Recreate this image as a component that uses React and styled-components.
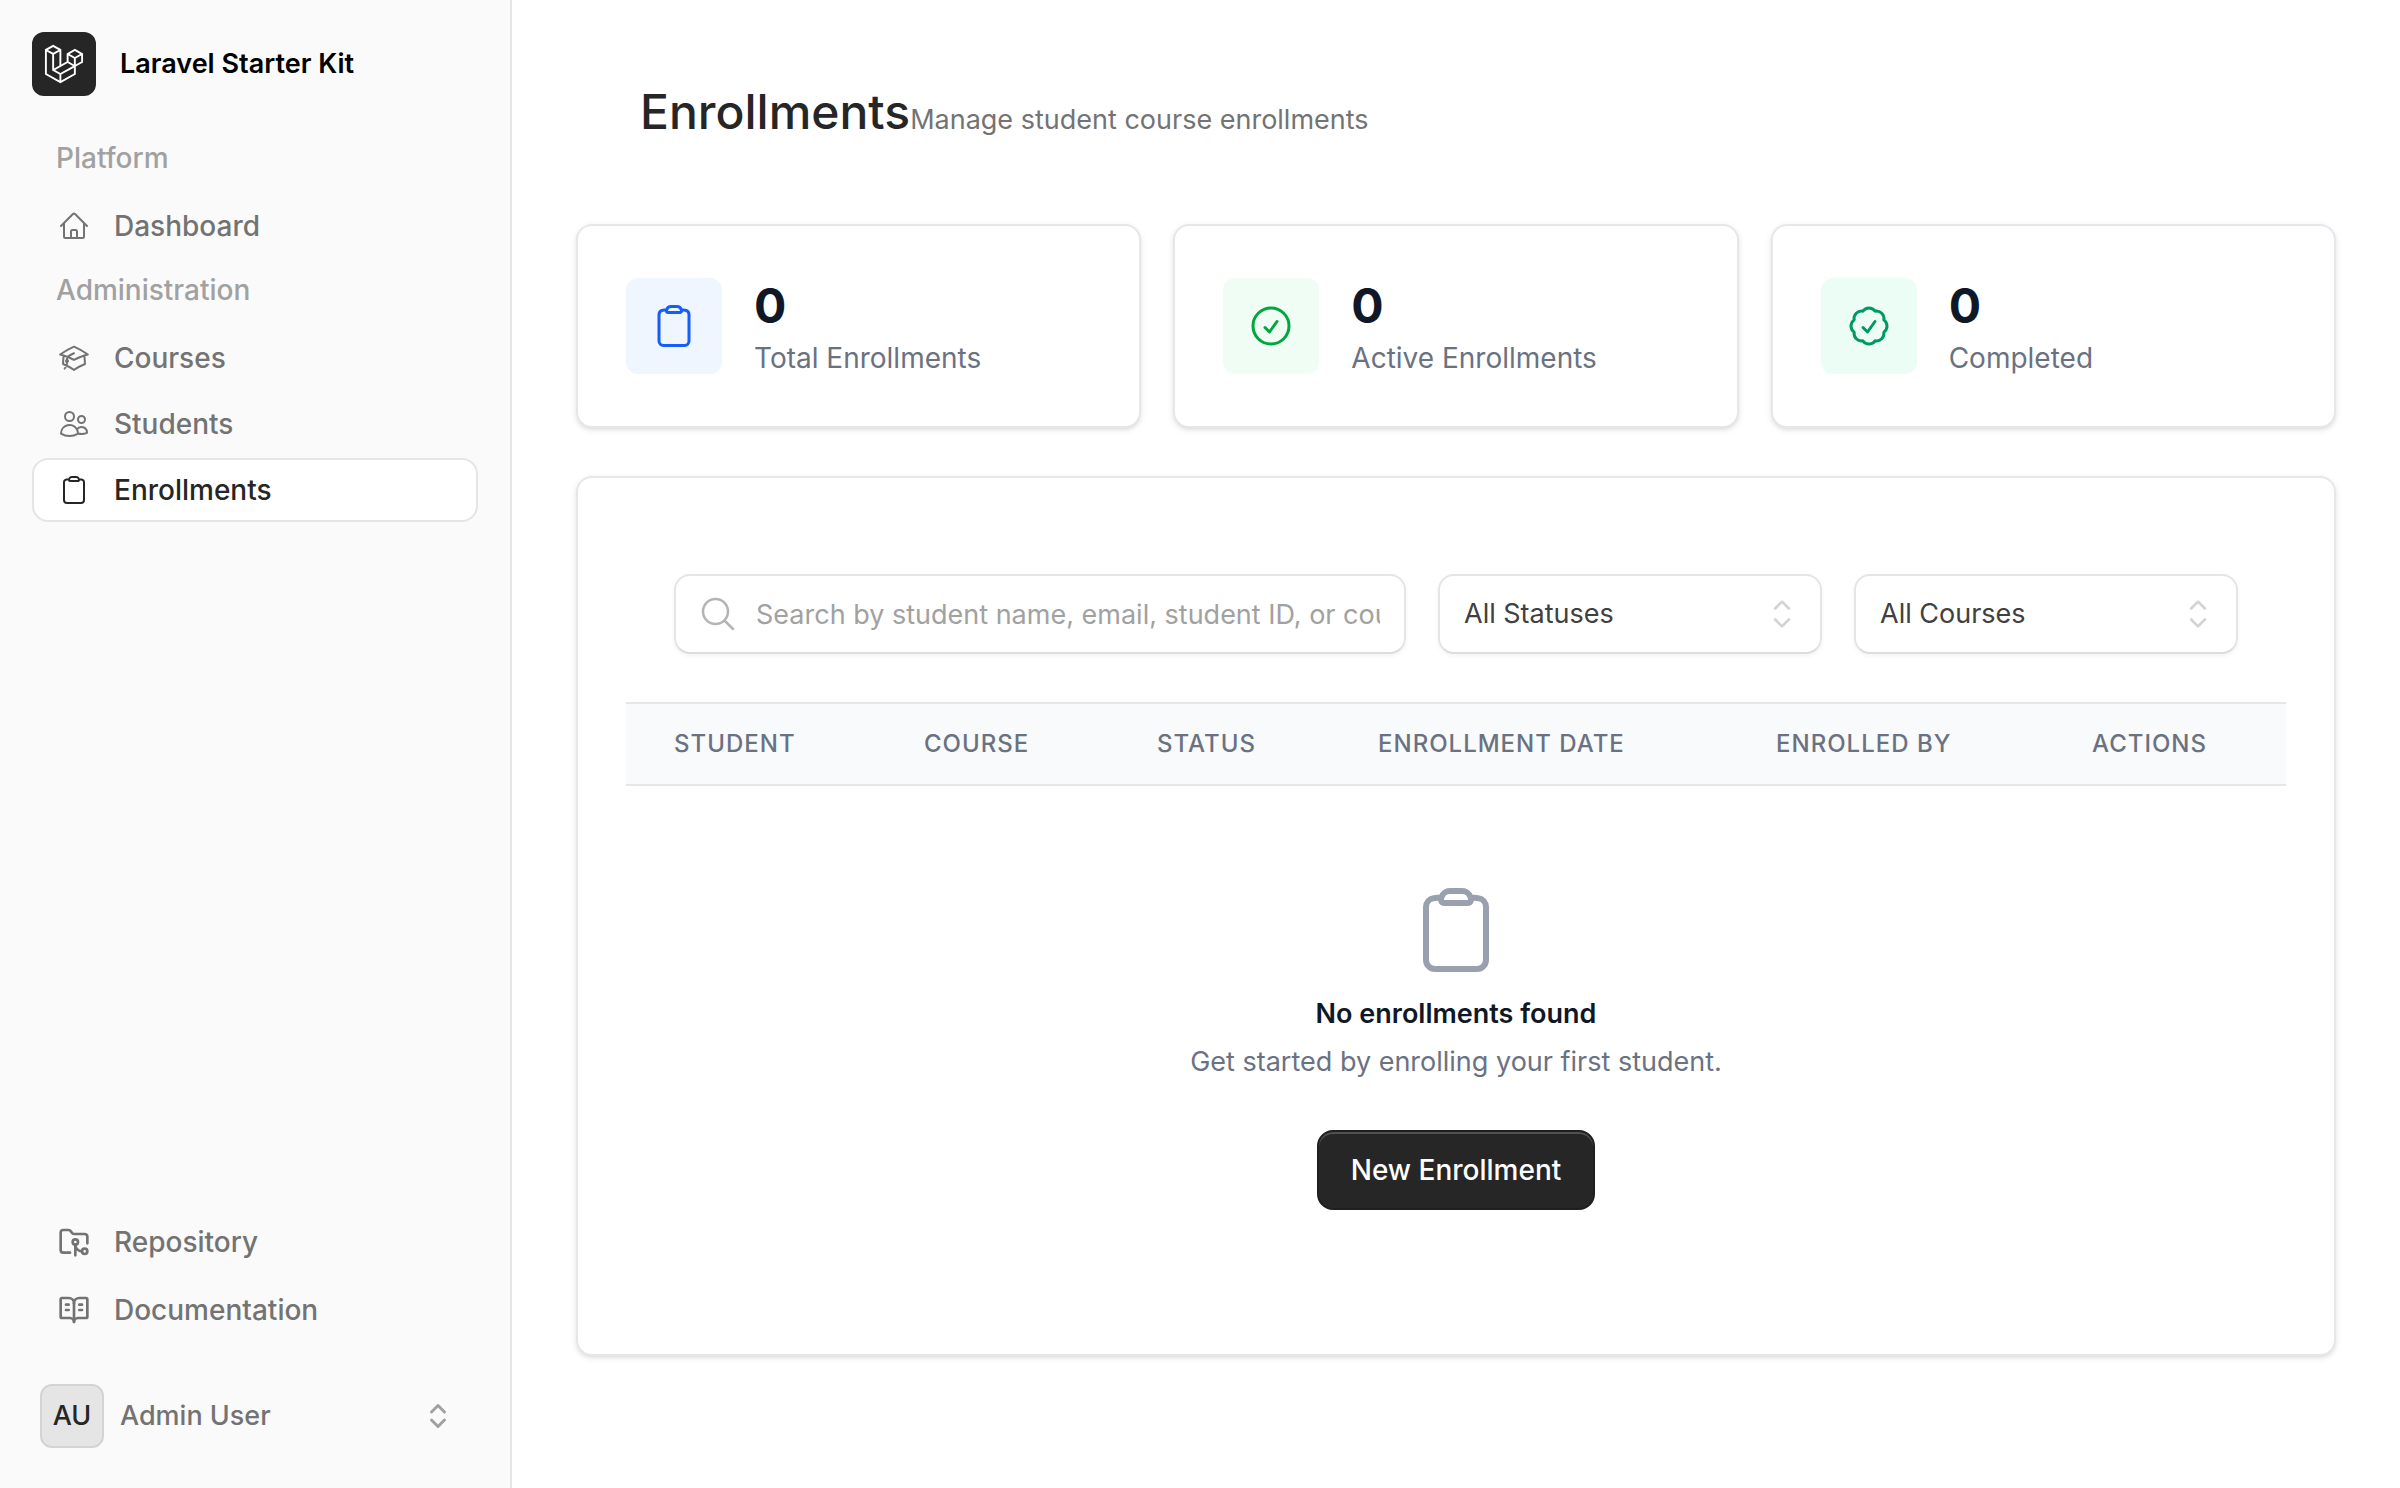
import React from "react";
import styled, { createGlobalStyle, css } from "styled-components";
import {
  HiOutlineAcademicCap,
  HiOutlineCheckBadge,
  HiOutlineCheckCircle,
  HiOutlineChevronUpDown,
  HiOutlineClipboard,
  HiOutlineHome,
  HiOutlineMagnifyingGlass,
  HiOutlineUsers,
} from "react-icons/hi2";
import { BookOpenText, FolderGit2 } from "lucide-react";

const GlobalStyle = createGlobalStyle`
  *, *::before, *::after { box-sizing: border-box; }
  body {
    margin: 0;
    background: #fff;
    color: #262626;
    font-family: Inter, "Liberation Sans", sans-serif;
    font-size: 27px;
    line-height: 40px;
    -webkit-font-smoothing: antialiased;
  }
  h1, h2, p { margin: 0; }
  button, input, select { font: inherit; }
  svg { display: block; flex: none; }
`;

const Shell = styled.div`
  display: grid;
  grid-template-columns: 512px minmax(0, 1fr);
  min-height: 100vh;
`;

/* Sidebar */

const Sidebar = styled.aside`
  display: flex;
  flex-direction: column;
  padding: 32px;
  background: #fafafa;
  border-right: 2px solid #e5e5e5;
`;

const Brand = styled.a`
  display: flex;
  align-items: center;
  gap: 24px;
  color: #000;
  font-weight: 600;
  text-decoration: none;
`;

const BrandMark = styled.span`
  display: grid;
  place-items: center;
  width: 64px;
  height: 64px;
  border-radius: 12px;
  background: #262626;
  color: #fff;
`;

const NavGroups = styled.nav`
  display: flex;
  flex-direction: column;
  margin-top: 30px;
`;

const GroupLabel = styled.h2`
  padding: 12px 24px 16px;
  color: #a1a1a1;
  font-size: 28px;
  font-weight: 500;
`;

const NavList = styled.ul`
  display: flex;
  flex-direction: column;
  gap: ${(p) => p.$gap}px;
  margin: 0;
  padding: 0;
  list-style: none;
`;

const NavLink = styled.a`
  display: flex;
  align-items: center;
  gap: 24px;
  height: 64px;
  padding: 0 24px;
  border: 2px solid transparent;
  border-radius: 16px;
  color: #737373;
  font-size: 28px;
  font-weight: 500;
  text-decoration: none;
  svg { width: 32px; height: 32px; }
  ${(p) =>
    p.$active &&
    css`
      background: #fff;
      border-color: #e5e5e5;
      color: #262626;
    `}
`;

const FooterNav = styled.nav`
  margin-top: auto;
  margin-bottom: 34px;
`;

const Profile = styled.button`
  display: flex;
  align-items: center;
  gap: 16px;
  padding: 8px;
  border: 0;
  background: none;
  color: #737373;
  font-weight: 500;
  text-align: left;
  svg { margin-left: auto; margin-right: 16px; color: #a1a1a1; }
`;

const Avatar = styled.span`
  display: grid;
  place-items: center;
  width: 64px;
  height: 64px;
  border: 2px solid #d4d4d4;
  border-radius: 12px;
  background: #e5e5e5;
  color: #262626;
`;

/* Main column */

const Main = styled.main`
  padding: 64px;
`;

const PageHeader = styled.header`
  display: flex;
  align-items: baseline;
  padding: 16px 64px 80px;
`;

const Title = styled.h1`
  font-size: 48px;
  line-height: 64px;
  font-weight: 500;
`;

const Lead = styled.p`
  color: #737373;
`;

const cardFrame = css`
  border: 2px solid #e5e7eb;
  border-radius: 16px;
  background: #fff;
  box-shadow: 0 2px 6px rgba(0, 0, 0, 0.1), 0 2px 4px -2px rgba(0, 0, 0, 0.1);
`;

const Stats = styled.section`
  display: grid;
  grid-template-columns: repeat(3, minmax(0, 1fr));
  gap: 32px;
  margin-bottom: 48px;
`;

const StatCard = styled.div`
  ${cardFrame}
  display: flex;
  align-items: center;
  gap: 32px;
  padding: 48px;
`;

const StatIcon = styled.div`
  display: grid;
  place-items: center;
  width: 96px;
  height: 96px;
  border-radius: 12px;
  background: ${(p) => p.$bg};
  color: ${(p) => p.$color};
  svg { width: 48px; height: 48px; }
`;

const StatValue = styled.p`
  color: #101828;
  font-size: 48px;
  line-height: 64px;
  font-weight: 700;
`;

const StatLabel = styled.p`
  color: #6a7282;
  font-size: 28px;
`;

const Panel = styled.section`
  ${cardFrame}
  padding: 48px;
`;

const Filters = styled.form`
  display: flex;
  gap: 32px;
  padding: 48px;
`;

const controlFrame = css`
  width: 100%;
  height: 80px;
  border: 2px solid #e5e5e5;
  border-bottom-color: #dcdcdc;
  border-radius: 16px;
  background: #fff;
  box-shadow: 0 2px 4px rgba(0, 0, 0, 0.05);
`;

const Field = styled.label`
  position: relative;
  flex: ${(p) => (p.$grow ? "1 1 0" : "0 0 384px")};
  min-width: 0;
  svg {
    position: absolute;
    pointer-events: none;
    ${(p) =>
      p.$grow
        ? css`
            top: 20px;
            left: 24px;
            width: 40px;
            height: 40px;
            color: #b4b4b4;
          `
        : css`
            top: 18px;
            right: 18px;
            width: 44px;
            height: 44px;
            color: #d4d4d4;
          `}
  }
`;

const SearchInput = styled.input`
  ${controlFrame}
  padding: 0 24px 0 80px;
  color: #404040;
  &::placeholder { color: #a1a1a1; opacity: 1; }
`;

const Select = styled.select`
  ${controlFrame}
  appearance: none;
  padding: 0 64px 0 24px;
  color: #404040;
`;

const Table = styled.table`
  width: 100%;
  table-layout: fixed;
  border-collapse: separate;
  border-spacing: 0;
`;

const HeadCell = styled.th`
  width: ${(p) => p.$width}px;
  padding: 20px 0 20px 48px;
  border-top: 2px solid #e5e7eb;
  border-bottom: 2px solid #e5e7eb;
  background: #f9fafb;
  color: #6a7282;
  font-size: 24px;
  font-weight: 500;
  letter-spacing: 1px;
  text-align: left;
  text-transform: uppercase;
  white-space: nowrap;
`;

const EmptyCell = styled.td`
  padding: 96px 48px;
`;

const Empty = styled.div`
  display: flex;
  flex-direction: column;
  align-items: center;
  color: #6a7282;
  svg { width: 96px; height: 96px; margin-bottom: 16px; color: #99a1af; }
`;

const EmptyTitle = styled.h2`
  margin-bottom: 8px;
  color: #101828;
  font-size: 27px;
  line-height: 40px;
  font-weight: 600;
`;

const PrimaryButton = styled.button`
  height: 80px;
  margin-top: 48px;
  padding: 0 32px;
  border: 2px solid #1f1f1f;
  border-radius: 16px;
  background: #262626;
  color: #fff;
  font-size: 28px;
  font-weight: 500;
  box-shadow: inset 0 2px 0 rgba(255, 255, 255, 0.2);
`;

function LaravelMark() {
  return (
    <svg width="40" height="40" viewBox="0 0 40 42" fill="currentColor" aria-hidden="true">
      <path
        fillRule="evenodd"
        clipRule="evenodd"
        d="M17.2 5.633 8.6.855 0 5.633v26.51l16.2 9 16.2-9v-8.442l7.6-4.223V9.856l-8.6-4.777-8.6 4.777V18.3l-5.6 3.111V5.633ZM38 18.301l-5.6 3.11v-6.157l5.6-3.11V18.3Zm-1.06-7.856-5.54 3.078-5.54-3.079 5.54-3.078 5.54 3.079ZM24.8 18.3v-6.157l5.6 3.111v6.158L24.8 18.3Zm-1 1.732 5.54 3.078-13.14 7.302-5.54-3.078 13.14-7.3v-.002Zm-16.2 7.89 7.6 4.222V38.3L2 30.966V7.92l5.6 3.111v16.892ZM8.6 9.3 3.06 6.222 8.6 3.143l5.54 3.08L8.6 9.3Zm21.8 15.51-13.2 7.334V38.3l13.2-7.334v-6.156ZM9.6 11.034l5.6-3.11v14.6l-5.6 3.11v-14.6Z"
      />
    </svg>
  );
}

function ProfileChevrons() {
  return (
    <svg
      width="32"
      height="32"
      viewBox="0 0 32 32"
      fill="none"
      stroke="currentColor"
      strokeWidth="3"
      strokeLinecap="round"
      strokeLinejoin="round"
      aria-hidden="true"
    >
      <path d="M9.5 12 16 5.5l6.5 6.5M9.5 20l6.5 6.5 6.5-6.5" />
    </svg>
  );
}

const groups = [
  { label: "Platform", items: [{ name: "Dashboard", Icon: HiOutlineHome }] },
  {
    label: "Administration",
    items: [
      { name: "Courses", Icon: HiOutlineAcademicCap },
      { name: "Students", Icon: HiOutlineUsers },
      { name: "Enrollments", Icon: HiOutlineClipboard, active: true },
    ],
  },
];

const resources = [
  { name: "Repository", Icon: FolderGit2 },
  { name: "Documentation", Icon: BookOpenText },
];

const stats = [
  { label: "Total Enrollments", value: 0, Icon: HiOutlineClipboard, bg: "#eff6ff", color: "#155dfc" },
  { label: "Active Enrollments", value: 0, Icon: HiOutlineCheckCircle, bg: "#f0fdf4", color: "#00a63e" },
  { label: "Completed", value: 0, Icon: HiOutlineCheckBadge, bg: "#ecfdf5", color: "#009966" },
];

const columns = [
  { name: "Student", width: 250 },
  { name: "Course", width: 233 },
  { name: "Status", width: 221 },
  { name: "Enrollment Date", width: 398 },
  { name: "Enrolled By", width: 316 },
  { name: "Actions", width: 242 },
];

function NavItems({ items, gap }) {
  return (
    <NavList $gap={gap}>
      {items.map(({ name, Icon, active }) => (
        <li key={name}>
          <NavLink href="#" $active={active} aria-current={active ? "page" : undefined}>
            <Icon aria-hidden="true" />
            {name}
          </NavLink>
        </li>
      ))}
    </NavList>
  );
}

export default function App() {
  return (
    <>
      <GlobalStyle />
      <Shell>
        <Sidebar>
          <Brand href="#">
            <BrandMark>
              <LaravelMark />
            </BrandMark>
            Laravel Starter Kit
          </Brand>
          <NavGroups>
            {groups.map((group) => (
              <div key={group.label}>
                <GroupLabel>{group.label}</GroupLabel>
                <NavItems items={group.items} gap={2} />
              </div>
            ))}
          </NavGroups>
          <FooterNav>
            <NavItems items={resources} gap={4} />
          </FooterNav>
          <Profile type="button">
            <Avatar>AU</Avatar>
            Admin User
            <ProfileChevrons />
          </Profile>
        </Sidebar>

        <Main>
          <PageHeader>
            <Title>Enrollments</Title>
            <Lead>Manage student course enrollments</Lead>
          </PageHeader>

          <Stats>
            {stats.map(({ label, value, Icon, bg, color }) => (
              <StatCard key={label}>
                <StatIcon $bg={bg} $color={color}>
                  <Icon aria-hidden="true" />
                </StatIcon>
                <div>
                  <StatValue>{value}</StatValue>
                  <StatLabel>{label}</StatLabel>
                </div>
              </StatCard>
            ))}
          </Stats>

          <Panel>
            <Filters>
              <Field $grow>
                <HiOutlineMagnifyingGlass aria-hidden="true" />
                <SearchInput
                  type="text"
                  aria-label="Search enrollments"
                  placeholder="Search by student name, email, student ID, or course..."
                />
              </Field>
              <Field>
                <Select aria-label="Status" defaultValue="all">
                  <option value="all">All Statuses</option>
                </Select>
                <HiOutlineChevronUpDown aria-hidden="true" />
              </Field>
              <Field>
                <Select aria-label="Course" defaultValue="all">
                  <option value="all">All Courses</option>
                </Select>
                <HiOutlineChevronUpDown aria-hidden="true" />
              </Field>
            </Filters>

            <Table>
              <thead>
                <tr>
                  {columns.map((column) => (
                    <HeadCell key={column.name} scope="col" $width={column.width}>
                      {column.name}
                    </HeadCell>
                  ))}
                </tr>
              </thead>
              <tbody>
                <tr>
                  <EmptyCell colSpan={columns.length}>
                    <Empty>
                      <HiOutlineClipboard aria-hidden="true" />
                      <EmptyTitle>No enrollments found</EmptyTitle>
                      <p>Get started by enrolling your first student.</p>
                      <PrimaryButton type="button">New Enrollment</PrimaryButton>
                    </Empty>
                  </EmptyCell>
                </tr>
              </tbody>
            </Table>
          </Panel>
        </Main>
      </Shell>
    </>
  );
}
